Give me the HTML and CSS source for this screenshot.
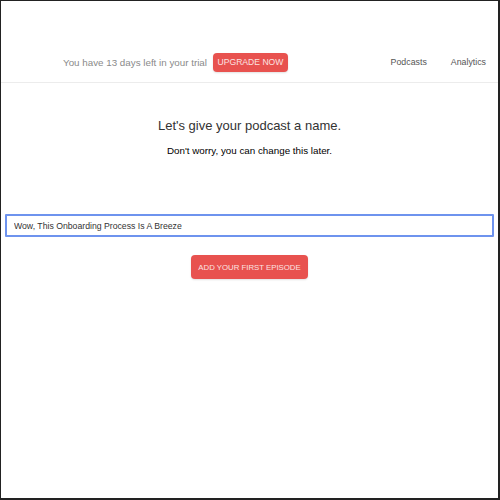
FILE: index.html
```html
<!DOCTYPE html>
<html lang="en">
<head>
  <meta charset="UTF-8">
  <title>Name your podcast</title>
  <link rel="stylesheet" href="styles.css">
</head>
<body>
  <div class="frame">
    <div class="topbar">
      <div class="trial">
        <span>You have 13 days left in your trial</span>
        <button class="btn btn-small">UPGRADE NOW</button>
      </div>
      <nav class="nav">
        <a href="#">Podcasts</a>
        <a href="#">Analytics</a>
      </nav>
    </div>

    <div class="content">
      <h1>Let's give your podcast a name.</h1>
      <p class="hint">Don't worry, you can change this later.</p>

      <input type="text" class="name-input" value="Wow, This Onboarding Process Is A Breeze">

      <button class="btn btn-main">ADD YOUR FIRST EPISODE</button>
    </div>
  </div>
</body>
</html>
```

FILE: styles.css
```css
html, body {
  margin: 0;
  padding: 0;
  background: #fff;
}
body {
  font-family: "Liberation Sans", Arial, sans-serif;
}
.frame {
  box-sizing: border-box;
  width: 500px;
  height: 500px;
  border-left: 1px solid #222;
  border-top: 1px solid #222;
  border-right: 2px solid #222;
  border-bottom: 2px solid #222;
}
.topbar {
  display: flex;
  align-items: center;
  justify-content: space-between;
  height: 82px;
  padding: 41px 12px 0 62px;
  box-sizing: border-box;
  border-bottom: 1px solid #ececec;
}
.trial {
  display: flex;
  align-items: center;
  gap: 6px;
  font-size: 9.8px;
  color: #8a8a8a;
}
.nav {
  display: flex;
  gap: 24px;
}
.nav a {
  font-size: 8.8px;
  color: #555;
  text-decoration: none;
}
.btn {
  background-color: #e8524f;
  color: #fbe3e2;
  border: none;
  border-radius: 4px;
  font-family: "Liberation Sans", Arial, sans-serif;
  box-shadow: 0 1px 2px rgba(0, 0, 0, 0.12);
  white-space: nowrap;
  padding: 0;
  cursor: pointer;
}
.btn-small {
  font-size: 8.6px;
  height: 19px;
  width: 75px;
}
.content {
  display: flex;
  flex-direction: column;
  align-items: center;
  padding-top: 35px;
}
h1 {
  margin: 0;
  font-size: 13px;
  font-weight: normal;
  color: #333;
}
.hint {
  margin: 12px 0 0;
  font-size: 9.8px;
  color: #000;
}
.name-input {
  box-sizing: border-box;
  align-self: stretch;
  margin: 58px 4px 0 4px;
  height: 23px;
  padding: 0 7px;
  border: 2px solid #6e93ee;
  border-radius: 1px;
  font-family: "Liberation Sans", Arial, sans-serif;
  font-size: 8.7px;
  color: #333;
  outline: none;
}
.btn-main {
  margin-top: 18px;
  height: 24px;
  width: 117px;
  font-size: 7.8px;
}
```
